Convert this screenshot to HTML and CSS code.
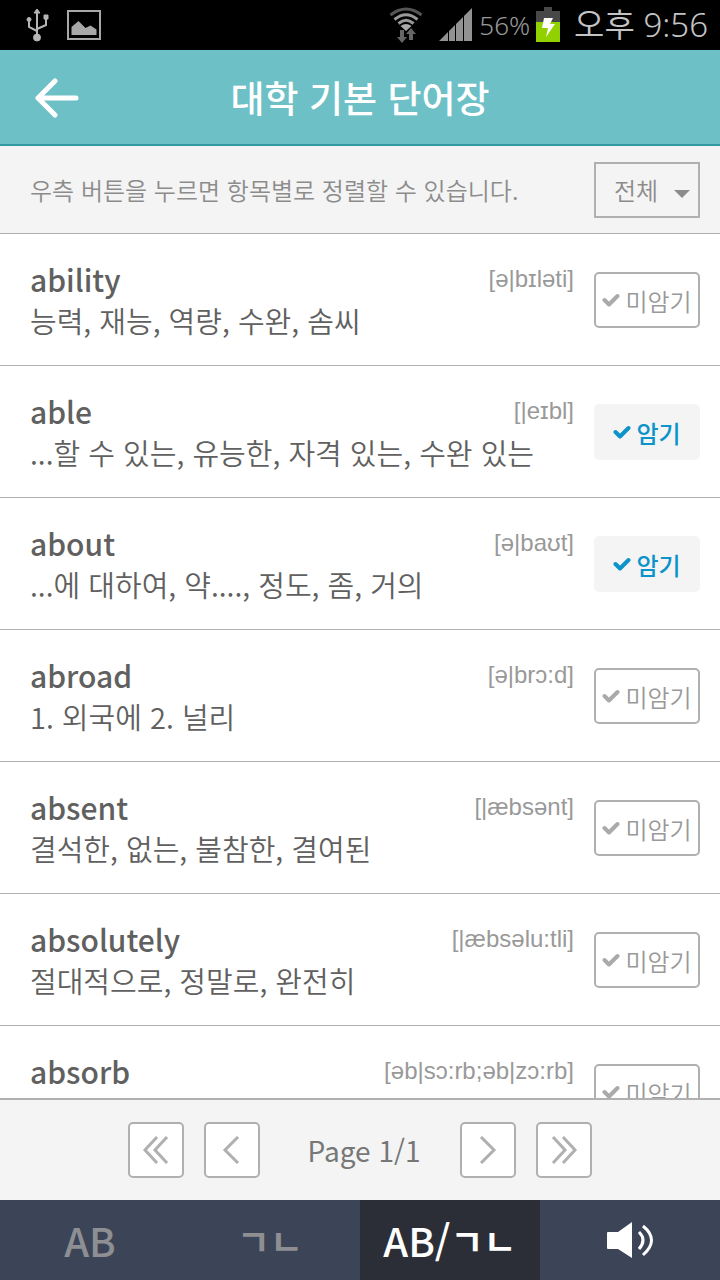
FILE: index.html
```
<!DOCTYPE html>
<html lang="ko">
<head>
  <meta charset="UTF-8">
  <meta name="viewport" content="width=device-width, initial-scale=1">
  <title>대학 기본 단어장</title>
  <link rel="stylesheet" href="styles.css">
</head>
<body>
  <svg class="defs" aria-hidden="true">
    <symbol id="check" viewBox="0 0 18 14">
      <path d="M2.500 7l4.500 4.500L15.500 3" fill="none" stroke="currentColor" stroke-width="4" stroke-linecap="round" stroke-linejoin="round"/>
    </symbol>
  </svg>

  <div class="status-bar">
    <div class="status-group">
      <svg class="usb" width="24" height="36" viewBox="0 0 24 36" fill="none" stroke="#b5b5b5" stroke-width="2">
        <path d="M12 6v23M12 24L4 20v-6M12 22l9-4v-6"/>
        <path d="M12 2l3 4H9zM19 8h4v4h-4zM12 27a3.500 3.500 0 1 1 0 7a3.500 3.500 0 0 1 0-7zM4 10.500a2 2 0 1 1 0 4a2 2 0 0 1 0-4z" fill="#b5b5b5" stroke-width="1"/>
      </svg>
      <svg width="34" height="30" viewBox="0 0 34 30">
        <rect x="1" y="1" width="32" height="28" fill="none" stroke="#a8a8a8" stroke-width="2"/>
        <path d="M4.500 25v-8l7-6 7 7 5-2.500 6 4V25z" fill="#a8a8a8"/>
      </svg>
    </div>
    <div class="status-group status-right">
      <svg class="wifi" width="34" height="38" viewBox="0 0 34 38" fill="none">
        <path d="M1.500 9Q17-3 32.500 9" stroke="#555" stroke-width="3"/>
        <path d="M5.500 13.500Q17 4 28.500 13.500M9.500 17.500Q17 11 24.500 17.500" stroke="#999" stroke-width="3"/>
        <path d="M11.500 20q5.500-4 11 0L17 25z" fill="#aaa"/>
        <path d="M11 24h4v7h3l-5 6-5-6h3zM20 34v-6h-3l5-6 5 6h-3v6z" fill="#666"/>
      </svg>
      <svg class="signal" width="34" height="34" viewBox="0 0 34 34" fill="#929292">
        <path d="M0 33L9 24v9zM10 23l6-6v16h-6zM17 16l7-7v24h-7zM25 8l8-8v33h-8z"/>
      </svg>
      <span class="battery-text">56%</span>
      <svg class="battery" width="24" height="36" viewBox="0 0 24 36">
        <path d="M8 0h8v4h8v11H0V4h8z" fill="#484848"/>
        <path d="M0 15h24v20H0z" fill="#92d100"/>
        <path d="M8 11h9l-3 6h5L10 30l2-9H6z" fill="#fff"/>
      </svg>
      <span class="clock">오후 9:56</span>
    </div>
  </div>

  <header class="header">
    <button class="back" aria-label="뒤로">
      <svg width="46" height="42" viewBox="0 0 46 42" fill="none" stroke="#fff" stroke-width="5" stroke-linecap="round" stroke-linejoin="round">
        <path d="M21 5L4 22l17 17M4 22h38"/>
      </svg>
    </button>
    <h1>대학 기본 단어장</h1>
  </header>

  <div class="filter">
    <label for="sort">우측 버튼을 누르면 항목별로 정렬할 수 있습니다.</label>
    <div class="select-box">
      <select id="sort">
        <option>전체</option>
        <option>암기</option>
        <option>미암기</option>
      </select>
    </div>
  </div>

  <ul class="word-list">
    <li class="word-row">
      <div class="word-info">
        <div class="word-head"><h2>ability</h2><span class="phonetic">[ə|bɪləti]</span></div>
        <p>능력, 재능, 역량, 수완, 솜씨</p>
      </div>
      <button class="memo" aria-pressed="false"><svg><use href="#check"/></svg>미암기</button>
    </li>
    <li class="word-row">
      <div class="word-info">
        <div class="word-head"><h2>able</h2><span class="phonetic">[|eɪbl]</span></div>
        <p>...할 수 있는, 유능한, 자격 있는, 수완 있는</p>
      </div>
      <button class="memo done" aria-pressed="true"><svg><use href="#check"/></svg>암기</button>
    </li>
    <li class="word-row">
      <div class="word-info">
        <div class="word-head"><h2>about</h2><span class="phonetic">[ə|baʊt]</span></div>
        <p>...에 대하여, 약...., 정도, 좀, 거의</p>
      </div>
      <button class="memo done" aria-pressed="true"><svg><use href="#check"/></svg>암기</button>
    </li>
    <li class="word-row">
      <div class="word-info">
        <div class="word-head"><h2>abroad</h2><span class="phonetic">[ə|brɔ:d]</span></div>
        <p>1. 외국에 2. 널리</p>
      </div>
      <button class="memo" aria-pressed="false"><svg><use href="#check"/></svg>미암기</button>
    </li>
    <li class="word-row">
      <div class="word-info">
        <div class="word-head"><h2>absent</h2><span class="phonetic">[|æbsənt]</span></div>
        <p>결석한, 없는, 불참한, 결여된</p>
      </div>
      <button class="memo" aria-pressed="false"><svg><use href="#check"/></svg>미암기</button>
    </li>
    <li class="word-row">
      <div class="word-info">
        <div class="word-head"><h2>absolutely</h2><span class="phonetic">[|æbsəlu:tli]</span></div>
        <p>절대적으로, 정말로, 완전히</p>
      </div>
      <button class="memo" aria-pressed="false"><svg><use href="#check"/></svg>미암기</button>
    </li>
    <li class="word-row">
      <div class="word-info">
        <div class="word-head"><h2>absorb</h2><span class="phonetic">[əb|sɔ:rb;əb|zɔ:rb]</span></div>
      </div>
      <button class="memo" aria-pressed="false"><svg><use href="#check"/></svg>미암기</button>
    </li>
  </ul>

  <div class="pager">
    <button aria-label="처음"><svg viewBox="0 0 28 28"><path d="M15 1L3 14l12 13M25 1L13 14l12 13"/></svg></button>
    <button aria-label="이전"><svg viewBox="0 0 28 28"><path d="M20 1L7 14l13 13"/></svg></button>
    <span class="page-text">Page 1/1</span>
    <button aria-label="다음"><svg viewBox="0 0 28 28"><path d="M7 1l13 13L7 27"/></svg></button>
    <button aria-label="마지막"><svg viewBox="0 0 28 28"><path d="M3 1l12 13L3 27M13 1l12 13-12 13"/></svg></button>
  </div>

  <nav class="tabs">
    <button>AB</button>
    <button><span class="jamo">ㄱㄴ</span></button>
    <button class="active">AB/<span class="jamo">ㄱㄴ</span></button>
    <button aria-label="발음 듣기">
      <svg width="48" height="38" viewBox="0 0 48 38">
        <path d="M2 11h10L26 1v36L12 28H2q-1 0-1-1V12q0-1 1-1z" fill="#fff"/>
        <path d="M33 11q8 8 0 17M37 5q17 14 0 29" fill="none" stroke="#fff" stroke-width="3"/>
      </svg>
    </button>
  </nav>
</body>
</html>
```
FILE: styles.css
```
* {
  box-sizing: border-box;
}
body {
  margin: 0;
  height: 100vh;
  display: flex;
  flex-direction: column;
  background: #fff;
  color: #606060;
  font-family: "Noto Sans CJK KR", sans-serif;
}
button, select {
  font-family: inherit;
  margin: 0;
  padding: 0;
  cursor: pointer;
}
h1, h2, p, ul {
  margin: 0;
  padding: 0;
}
.defs {
  display: none;
}

/* status bar */
.status-bar {
  flex: none;
  height: 50px;
  padding: 0 12px 0 25px;
  display: flex;
  justify-content: space-between;
  align-items: center;
  background: #000;
}
.status-group {
  display: flex;
  align-items: center;
  gap: 18px;
}
.status-right {
  gap: 6px;
}
.signal {
  margin-left: 10px;
}
.battery-text {
  color: #999;
  font-family: "Noto Sans", sans-serif;
  font-size: 26px;
  font-weight: 300;
}
.clock {
  margin-left: 8px;
  color: #c4c4c4;
  font-family: "Noto Sans", "Noto Sans CJK KR", sans-serif;
  font-size: 33px;
  font-weight: 350;
  line-height: 50px;
}

/* title */
.header {
  flex: none;
  height: 96px;
  padding: 0 34px;
  display: grid;
  grid-template-columns: 46px 1fr 46px;
  align-items: center;
  background: #6ec0c7;
  border-bottom: 2px solid #2f9aa3;
}
.back {
  height: 42px;
  background: none;
  border: none;
}
.header h1 {
  color: #fff;
  font-size: 37px;
  font-weight: 500;
  line-height: 48px;
  text-align: center;
}

/* filter */
.filter {
  flex: none;
  height: 88px;
  padding: 0 20px 0 30px;
  display: flex;
  justify-content: space-between;
  align-items: center;
  background: #f4f4f4;
  border-bottom: 1px solid #b0b0b0;
  color: #8c8c8c;
  font-size: 24px;
  font-weight: 350;
}
.select-box {
  position: relative;
}
.select-box::after {
  content: "";
  position: absolute;
  right: 10px;
  top: 28px;
  border: 8px solid transparent;
  border-top-color: #8c8c8c;
  border-bottom: none;
  pointer-events: none;
}
.select-box select {
  appearance: none;
  display: block;
  width: 106px;
  height: 56px;
  padding-left: 18px;
  background: transparent;
  border: 2px solid #b0b0b0;
  border-radius: 0;
  color: #8c8c8c;
  font-size: 24px;
  font-weight: 350;
}

/* words */
.word-list {
  flex: 1;
  min-height: 0;
  overflow-y: auto;
  scrollbar-width: none;
  list-style: none;
}
.word-row {
  min-height: 132px;
  padding: 24px 20px 25px 30px;
  display: flex;
  gap: 20px;
  border-bottom: 1px solid #b0b0b0;
}
.word-info {
  flex: 1;
}
.word-head {
  display: flex;
  justify-content: space-between;
}
.word-head h2 {
  font-size: 30px;
  font-weight: 500;
  line-height: 42px;
}
.phonetic {
  color: #999;
  font-family: "Liberation Sans", sans-serif;
  font-size: 24px;
  line-height: 42px;
}
.word-info p {
  font-size: 29px;
  font-weight: 350;
  line-height: 40px;
}
.memo {
  width: 106px;
  height: 56px;
  margin-top: 14px;
  display: flex;
  justify-content: center;
  align-items: center;
  gap: 5px;
  background: #fff;
  border: 2px solid #b0b0b0;
  border-radius: 5px;
  color: #999;
  font-size: 24px;
  font-weight: 350;
}
.memo svg {
  width: 18px;
  height: 14px;
  color: #aaa;
}
.memo.done {
  background: #f4f4f4;
  border-color: #f4f4f4;
  color: #0c93c9;
  font-weight: 500;
}
.memo.done svg {
  color: #0c93c9;
}

/* pager */
.pager {
  flex: none;
  height: 102px;
  display: flex;
  justify-content: center;
  align-items: center;
  gap: 20px;
  background: #f4f4f4;
  border-top: 2px solid #b0b0b0;
}
.pager button {
  width: 56px;
  height: 56px;
  display: flex;
  justify-content: center;
  align-items: center;
  background: #fff;
  border: 2px solid #b0b0b0;
  border-radius: 5px;
}
.pager svg {
  width: 28px;
  height: 28px;
  fill: none;
  stroke: #b0b0b0;
  stroke-width: 3;
}
.page-text {
  width: 160px;
  padding-left: 8px;
  color: #777;
  font-size: 28px;
  font-weight: 400;
  text-align: center;
}

/* bottom tabs */
.tabs {
  flex: none;
  height: 80px;
  display: grid;
  grid-template-columns: repeat(4, 1fr);
  background: #3c4457;
}
.tabs button {
  display: flex;
  justify-content: center;
  align-items: center;
  background: none;
  border: none;
  color: #8e8f93;
  font-family: "Noto Sans CJK KR", sans-serif;
  font-size: 40px;
  font-weight: 500;
  line-height: 40px;
}
.tabs .active {
  background: #2c2e37;
  color: #fff;
}
.jamo {
  font-size: 36px;
  font-weight: 700;
}
```
